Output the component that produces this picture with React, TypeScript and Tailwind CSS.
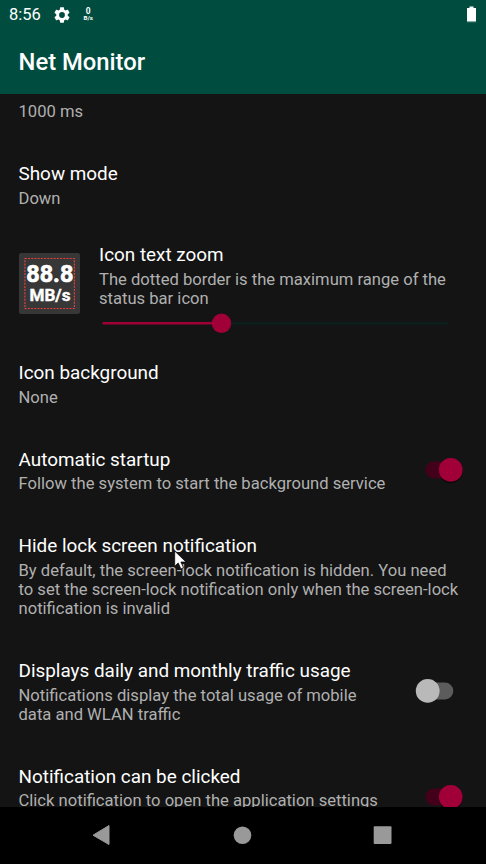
import type { ReactNode } from "react";

function Switch({ on }: { on: boolean }) {
  return (
    <div className="flex h-[26px] w-[42px] shrink-0 items-center">
      <svg width="42" height="28" viewBox="0 0 42 28" className="overflow-visible">
        <rect x="5.3" y="5.6" width="28" height="17" rx="8.5" fill={on ? "#42001b" : "#5c5c5c"} />
        {on && <circle cx="30.7" cy="15" r="12" fill="#050505" opacity=".8" />}
        <circle cx={on ? 30.7 : 7.7} cy="13.9" r="11.9" fill={on ? "#a00037" : "#b9b9b9"} />
      </svg>
    </div>
  );
}

function Labels({ title, lines, tight }: { title: string; lines: string[]; tight?: boolean }) {
  return (
    <div className="min-w-0 flex-1">
      <div className={`text-[18.9px] leading-[22px] text-white ${tight ? "h-[25px]" : "h-[25.6px]"}`}>{title}</div>
      {lines.map((line) => (
        <div key={line} className="h-[19.4px] text-[16.6px] leading-[19.4px] text-[#b0b0b0]">
          {line}
        </div>
      ))}
    </div>
  );
}

function Row({ className, title, lines, tight, children }: { className: string; title: string; lines: string[]; tight?: boolean; children?: ReactNode }) {
  return (
    <div className={`flex shrink-0 pl-[18.5px] whitespace-nowrap ${className}`}>
      <Labels title={title} lines={lines} tight={tight} />
      {children}
    </div>
  );
}

export default function App() {
  return (
    <div className="relative flex h-[864px] w-[486px] flex-col overflow-hidden bg-[#141414] font-['Roboto',sans-serif]">
      <header className="flex h-[94px] shrink-0 flex-col bg-[#004d40] text-white">
        <div className="flex h-[29px] items-center pr-[10px] pl-[9px]">
          <span className="w-[45px] text-[16.5px] leading-[20px]">8:56</span>
          <svg width="16" height="16" viewBox="2 2 20 20" fill="white">
            <path d="M19.14 12.94c.04-.3.06-.61.06-.94 0-.32-.02-.64-.07-.94l2.03-1.58c.18-.14.23-.41.12-.61l-1.92-3.32c-.12-.22-.37-.29-.59-.22l-2.39.96c-.5-.38-1.03-.7-1.62-.94l-.36-2.54c-.04-.24-.24-.41-.48-.41h-3.84c-.24 0-.43.17-.47.41l-.36 2.54c-.59.24-1.13.57-1.62.94l-2.39-.96c-.22-.08-.47 0-.59.22L2.74 8.87c-.12.21-.08.47.12.61l2.03 1.58c-.05.3-.09.63-.09.94s.02.64.07.94l-2.03 1.58c-.18.14-.23.41-.12.61l1.92 3.32c.12.22.37.29.59.22l2.39-.96c.5.38 1.03.7 1.62.94l.36 2.54c.05.24.24.41.48.41h3.84c.24 0 .44-.17.47-.41l.36-2.54c.59-.24 1.13-.56 1.62-.94l2.39.96c.22.08.47 0 .59-.22l1.92-3.32c.12-.22.07-.47-.12-.61zM12 15.6A3.6 3.6 0 1 1 12 8.4a3.6 3.6 0 0 1 0 7.2z" />
          </svg>
          <svg className="ml-[12px] overflow-visible" width="12" height="15" viewBox="0 0 12 15" fill="white" fontFamily="Roboto" fontWeight="700" textAnchor="middle">
            <text x="6.2" y="7.1" fontSize="9.3" textLength="4.8" lengthAdjust="spacingAndGlyphs">0</text>
            <text x="6.3" y="12.8" fontSize="6.2" textLength="9.5" lengthAdjust="spacingAndGlyphs">B/s</text>
          </svg>
          <svg className="ml-auto" width="9" height="17" viewBox="0 0 9 17">
            <path d="M2.5 .5h4V2H9v13.5H0V2h2.5z" fill="white" />
            <path d="M0 15.2h9v1H0z" fill="#86ada6" />
          </svg>
        </div>
        <h1 className="pt-[19px] pl-[18.5px] text-[23.8px] leading-[28px] font-medium">Net Monitor</h1>
      </header>

      <main className="flex h-[713px] shrink-0 flex-col overflow-hidden">
        <div className="h-[69px] shrink-0 pt-[8px] pl-[18.5px] text-[16.6px] leading-[19.4px] text-[#b0b0b0]">1000 ms</div>
        <Row className="h-[81.4px]" title="Show mode" lines={["Down"]} />
        <div className="flex h-[118px] shrink-0 pl-[18.5px] whitespace-nowrap">
          <div className="mt-[8.6px] h-[61.5px] w-[61.5px] shrink-0 rounded-[2px] bg-[#373737] p-[5px]">
            <svg width="51" height="51" viewBox="0 0 51 51" fill="white" fontFamily="Roboto" fontWeight="700" textAnchor="middle">
              <rect x=".9" y=".5" width="49.5" height="50" fill="none" stroke="#e53e3e" strokeWidth="1.2" strokeDasharray="2 1.2" />
              <text x="25.8" y="24.3" fontSize="24" stroke="white" strokeWidth=".7" textLength="47" lengthAdjust="spacingAndGlyphs">88.8</text>
              <text x="26" y="42.9" fontSize="17" stroke="white" strokeWidth=".4" textLength="41" lengthAdjust="spacingAndGlyphs">MB/s</text>
            </svg>
          </div>
          <div className="pl-[19px]">
            <Labels
              title="Icon text zoom"
              lines={["The dotted border is the maximum range of the", "status bar icon"]}
            />
            <svg className="mt-[4px] block" width="352" height="20" viewBox="0 0 352 20">
              <path d="M122 10.3h227" stroke="#0a211c" strokeWidth="2.3" />
              <path d="M4.6 10.3H122" stroke="#a00037" strokeWidth="2.5" strokeLinecap="round" />
              <circle cx="122.5" cy="10.3" r="9.7" fill="#a00037" />
            </svg>
          </div>
        </div>
        <Row className="h-[86.6px]" title="Icon background" lines={["None"]} />
        <Row tight className="h-[86px] pr-[24px]" title="Automatic startup" lines={["Follow the system to start the background service"]}>
          <div className="pt-[8px]"><Switch on /></div>
        </Row>
        <Row
          className="h-[125px]"
          title="Hide lock screen notification"
          lines={[
            "By default, the screen-lock notification is hidden. You need",
            "to set the screen-lock notification only when the screen-lock",
            "notification is invalid",
          ]}
        />
        <Row
          className="h-[106px] pr-[24px]"
          title="Displays daily and monthly traffic usage"
          lines={["Notifications display the total usage of mobile", "data and WLAN traffic"]}
        >
          <div className="pt-[18px]"><Switch on={false} /></div>
        </Row>
        <Row tight className="h-[87px] pr-[24px]" title="Notification can be clicked" lines={["Click notification to open the application settings"]}>
          <div className="pt-[18px]"><Switch on /></div>
        </Row>
      </main>

      <nav className="h-[57px] shrink-0 bg-black">
        <svg width="486" height="57" viewBox="0 0 486 57" fill="#999">
          <path d="M93 28.2 109 18.5v19z" stroke="#999" strokeWidth="1" strokeLinejoin="round" />
          <circle cx="242.5" cy="28.2" r="8.8" />
          <rect x="373.7" y="19.2" width="17.8" height="17.8" rx="1" />
        </svg>
      </nav>

      <svg className="absolute top-[550px] left-[174px]" width="13" height="20" viewBox="0 0 13 20">
        <path d="M.7 1v15.2l3.5-3.3 2.7 6 2.6-1.2-2.6-5.7H12z" fill="white" stroke="black" strokeWidth=".7" />
      </svg>
    </div>
  );
}
